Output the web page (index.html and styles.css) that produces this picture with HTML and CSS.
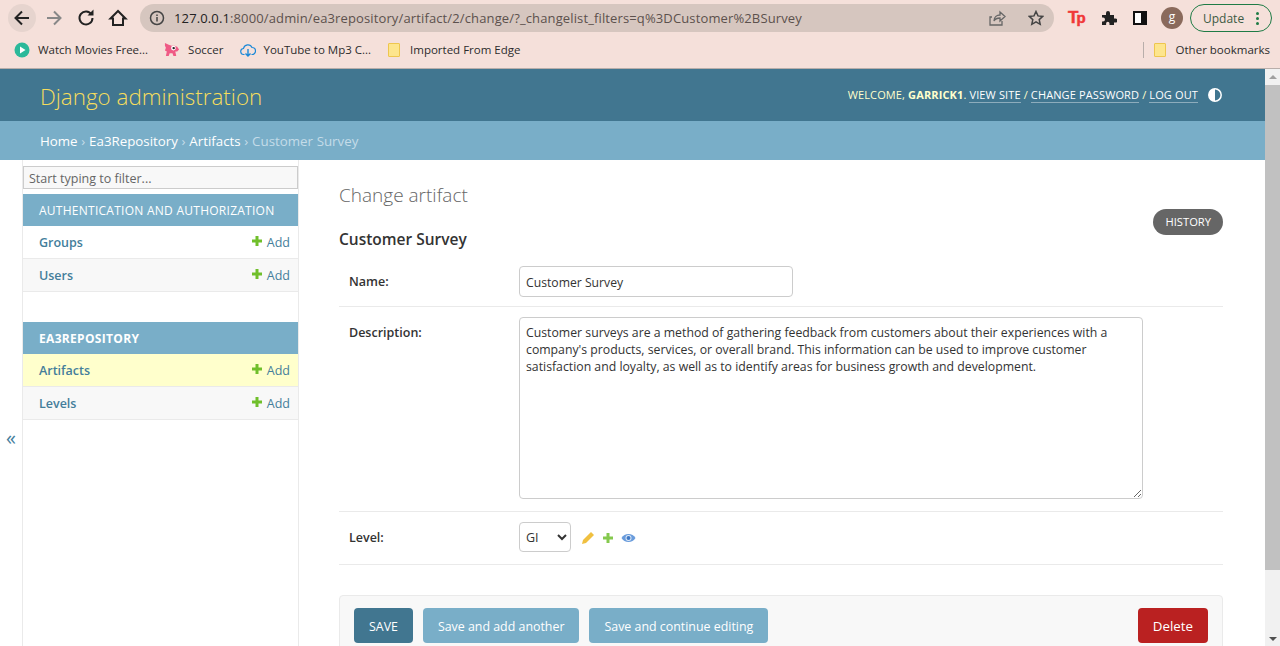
FILE: index.html
```html
<!DOCTYPE html>
<html lang="en">

<head>
    <meta charset="UTF-8">
    <title>Customer Survey | Change artifact | Django site admin</title>
    <link rel="stylesheet" href="styles.css">
</head>

<body>
    <div class="browser">
        <div class="toolbar">
            <span class="round-btn back">
                <svg width="20" height="20" viewBox="0 0 20 20"><path d="M17 10H4M10 3.5L3.5 10l6.500 6.500" fill="none" stroke="#222" stroke-width="2"/></svg>
            </span>
            <span class="round-btn">
                <svg width="20" height="20" viewBox="0 0 20 20"><path d="M3 10h13M10 3.500l6.500 6.500-6.500 6.500" fill="none" stroke="#888" stroke-width="2"/></svg>
            </span>
            <span class="round-btn">
                <svg width="20" height="20" viewBox="0 0 20 20"><path d="M15.500 6.500A6.500 6.500 0 1 0 16.500 10" fill="none" stroke="#222" stroke-width="2"/><path d="M11.500 7.500h6v-6z" fill="#222"/></svg>
            </span>
            <span class="round-btn">
                <svg width="20" height="20" viewBox="0 0 20 20"><path d="M10 3L2.500 10.500H5v6.500h10v-6.500h2.500z" fill="none" stroke="#222" stroke-width="2"/></svg>
            </span>
            <div class="omnibox">
                <svg class="info-icon" width="16" height="16" viewBox="0 0 16 16"><circle cx="8" cy="8" r="6.500" fill="none" stroke="#444" stroke-width="1.500"/><path d="M8 7v4.500M8 4.500v1.500" stroke="#444" stroke-width="1.500"/></svg>
                <span class="url"><span class="url-host">127.0.0.1</span>:8000/admin/ea3repository/artifact/2/change/?_changelist_filters=q%3DCustomer%2BSurvey</span>
                <svg class="share-icon" width="18" height="18" viewBox="0 0 18 18"><path d="M4 8H2v8h12v-4M6 12c0-4 3-6 6-6V3l5 4.500L12 12V9c-3 0-5 1-6 3z" fill="none" stroke="#666" stroke-width="1.300"/></svg>
                <svg class="star-icon" width="16" height="16" viewBox="0 0 16 16"><path d="M8 1.500l2 4.400 4.800.5-3.600 3.200 1 4.700L8 11.900l-4.200 2.400 1-4.700L1.200 6.400 6 5.900z" fill="none" stroke="#444" stroke-width="1.500"/></svg>
            </div>
            <span class="ext-tp">T<span class="ext-p">p</span></span>
            <svg class="ext-icon" width="16" height="16" viewBox="0 0 16 16"><path d="M1 5h4V3a2 2 0 0 1 4 0v2h4v3.500h1.500a2 2 0 0 1 0 4H13V15H8.500v-1.500a1.700 1.700 0 0 0-3.400 0V15H1v-3.500h1a2 2 0 0 0 0-4H1z" fill="#222"/></svg>
            <span class="side-panel"></span>
            <span class="avatar">g</span>
            <span class="update">Update<span class="dots"><i></i><i></i><i></i></span></span>
        </div>
        <div class="bookmarks">
            <span class="bookmark first">
                <svg width="16" height="16" viewBox="0 0 16 16"><circle cx="8" cy="8" r="7.500" fill="#2bb99a"/><path d="M6 4.500L11.500 8 6 11.500z" fill="#fff"/></svg>
                Watch Movies Free...
            </span>
            <span class="bookmark">
                <svg width="16" height="16" viewBox="0 0 17 17"><path d="M1 1l4 2 3 1h3l3 1 2 3-2 2h-2l1 5h-3l-1-3H6l-1 3H2l1-5-2-1 1-3-1-2z" fill="#ef5a85"/><circle cx="10" cy="6.500" r="2.500" fill="#fff"/><circle cx="10.300" cy="6.500" r="1.300" fill="#222"/></svg>
                Soccer
            </span>
            <span class="bookmark">
                <svg width="16" height="16" viewBox="0 0 16 16"><path d="M4.500 12.500H4a3 3 0 0 1-.500-6A4.500 4.500 0 0 1 12 5.500a3.500 3.500 0 0 1 0 7h-.5" fill="none" stroke="#1a88d8" stroke-width="1.200"/><path d="M8 7v7M5.500 11.500L8 14l2.500-2.500" fill="none" stroke="#1a88d8" stroke-width="1.400"/></svg>
                YouTube to Mp3 C...
            </span>
            <span class="bookmark imported">
                <span class="folder"></span>
                Imported From Edge
            </span>
            <span class="bookmark-sep"></span>
            <span class="bookmark other">
                <span class="folder"></span>
                Other bookmarks
            </span>
        </div>
    </div>

    <div class="page">
        <div class="viewport">
            <div class="header">
                <div class="branding">Django administration</div>
                <div class="user-tools">
                    <span>Welcome, <strong>garrick1</strong>. <a>View site</a> / <a>Change password</a> / <a>Log out</a></span>
                    <svg class="theme-toggle" width="16" height="16" viewBox="0 0 16 16"><circle cx="8" cy="8" r="6.200" fill="none" stroke="#fff" stroke-width="1.500"/><path d="M8 1.800a6.200 6.200 0 0 0 0 12.400z" fill="#fff"/></svg>
                </div>
            </div>
            <div class="breadcrumbs">
                <a>Home</a> › <a>Ea3Repository</a> › <a>Artifacts</a> › Customer Survey
            </div>

            <div class="main">
                <div class="nav-toggle">«</div>
                <div class="sidebar">
                    <input class="nav-filter" type="text" placeholder="Start typing to filter...">
                    <div class="app-module">
                        <div class="app-caption">Authentication and Authorization</div>
                        <div class="model-row"><a>Groups</a><span class="addlink"><svg class="plus" width="12" height="12" viewBox="0 0 12 12"><path d="M4.500 1h3v3.500H11v3H7.500V11h-3V7.500H1v-3h3.500z" fill="#70bf2b"/></svg>Add</span></div>
                        <div class="model-row alt"><a>Users</a><span class="addlink"><svg class="plus" width="12" height="12" viewBox="0 0 12 12"><path d="M4.500 1h3v3.500H11v3H7.500V11h-3V7.500H1v-3h3.500z" fill="#70bf2b"/></svg>Add</span></div>
                    </div>
                    <div class="app-module">
                        <div class="app-caption strong">Ea3Repository</div>
                        <div class="model-row current"><a>Artifacts</a><span class="addlink"><svg class="plus" width="12" height="12" viewBox="0 0 12 12"><path d="M4.500 1h3v3.500H11v3H7.500V11h-3V7.500H1v-3h3.500z" fill="#70bf2b"/></svg>Add</span></div>
                        <div class="model-row alt"><a>Levels</a><span class="addlink"><svg class="plus" width="12" height="12" viewBox="0 0 12 12"><path d="M4.500 1h3v3.500H11v3H7.500V11h-3V7.500H1v-3h3.500z" fill="#70bf2b"/></svg>Add</span></div>
                    </div>
                </div>

                <div class="content">
                    <div class="title-row">
                        <div>
                            <h1>Change artifact</h1>
                            <h2>Customer Survey</h2>
                        </div>
                        <a class="history">History</a>
                    </div>

                    <div class="form-row name-row">
                        <label>Name:</label>
                        <input class="text-input" type="text" value="Customer Survey">
                    </div>
                    <div class="form-row desc-row">
                        <label>Description:</label>
                        <textarea class="text-area">Customer surveys are a method of gathering feedback from customers about their experiences with a company's products, services, or overall brand. This information can be used to improve customer satisfaction and loyalty, as well as to identify areas for business growth and development.</textarea>
                    </div>
                    <div class="form-row level-row">
                        <label>Level:</label>
                        <select class="level-select"><option>GI</option></select>
                        <svg class="rel-icon first-rel" width="14" height="14" viewBox="0 0 14 14"><path d="M10 1l3 3-8 8-4 1 1-4z" fill="#f0c040"/></svg>
                        <svg class="rel-icon" width="12" height="12" viewBox="0 0 12 12"><path d="M4.500 1h3v3.500H11v3H7.500V11h-3V7.500H1v-3h3.500z" fill="#85c94e"/></svg>
                        <svg class="rel-icon" width="15" height="14" viewBox="0 0 15 14"><path d="M.5 7C2 4.300 4.500 3 7.500 3s5.500 1.300 7 4c-1.500 2.700-4 4-7 4s-5.500-1.300-7-4z" fill="#6a9cdc"/><circle cx="7.500" cy="7" r="3" fill="#dce8f7"/><circle cx="7.500" cy="7" r="2" fill="#3f78c4"/></svg>
                    </div>

                    <div class="submit-row">
                        <a class="btn btn-default">Save</a>
                        <a class="btn">Save and add another</a>
                        <a class="btn">Save and continue editing</a>
                        <a class="btn btn-delete">Delete</a>
                    </div>
                </div>
            </div>
        </div>
        <div class="scrollbar">
            <span class="arrow-up"></span>
            <span class="thumb"></span>
            <span class="arrow-down"></span>
        </div>
    </div>
</body>

</html>
```

FILE: styles.css
```css
* {
    box-sizing: border-box;
}

html,
body {
    height: 100%;
}

body {
    margin: 0;
    display: flex;
    flex-direction: column;
    overflow: hidden;
    font-family: "Open Sans", "Noto Sans", sans-serif;
    font-size: 13px;
    color: #333;
    background: #fff;
}

/* browser frame */
.browser {
    height: 69px;
    flex: none;
    background: #f5e0da;
    border-bottom: 1px solid #b8aeaa;
}

.toolbar {
    height: 36px;
    display: flex;
    align-items: center;
    padding-left: 8px;
}

.round-btn {
    width: 28px;
    height: 28px;
    margin-right: 4px;
    border-radius: 50%;
    display: flex;
    align-items: center;
    justify-content: center;
}

.back {
    background: #e6d4ce;
}

.omnibox {
    width: 914px;
    height: 28px;
    margin-left: 4px;
    border-radius: 14px;
    background: #d6c6bf;
    display: flex;
    align-items: center;
    padding-left: 9px;
}

.info-icon {
    flex: none;
}

.url {
    margin-left: 9px;
    font-size: 13px;
    letter-spacing: .13px;
    color: #5c514d;
    white-space: nowrap;
}

.url-host {
    color: #222;
}

.share-icon {
    margin-left: auto;
}

.star-icon {
    margin: 0 10px 0 22px;
}

.ext-tp {
    margin-left: 14px;
    width: 18px;
    font-family: "Liberation Sans", sans-serif;
    font-size: 17px;
    font-weight: bold;
    color: #f03838;
    letter-spacing: -2px;
    -webkit-text-stroke: .5px #f03838;
}

.ext-p {
    font-size: 15px;
}

.ext-icon {
    margin-left: 15px;
}

.side-panel {
    width: 14px;
    height: 14px;
    margin-left: 16px;
    border: 2px solid #111;
    border-left-width: 2px;
    border-right-width: 6px;
    background: #fff;
}

.avatar {
    width: 22px;
    height: 22px;
    margin-left: 14px;
    border-radius: 50%;
    background: #8a6a5c;
    color: #fff;
    font-size: 12px;
    line-height: 19px;
    text-align: center;
}

.update {
    width: 82px;
    height: 28px;
    margin-left: 7px;
    border: 1px solid #1e7b45;
    border-radius: 14px;
    display: flex;
    align-items: center;
    padding-left: 12px;
    font-size: 12px;
    color: #3d5a44;
}

.dots {
    margin-left: auto;
    margin-right: 12px;
    display: flex;
    flex-direction: column;
    gap: 2px;
}

.dots i {
    width: 3px;
    height: 3px;
    border-radius: 50%;
    background: #1e7b45;
}

.bookmarks {
    height: 32px;
    display: flex;
    align-items: center;
    padding-left: 14px;
    padding-bottom: 5px;
    font-size: 11.500px;
    color: #2c2c2c;
}

.bookmark {
    display: flex;
    align-items: center;
    gap: 8px;
    margin-right: 16px;
    white-space: nowrap;
}

.bookmark.imported {
    gap: 10px;
    margin-left: 1px;
}

.folder {
    width: 12px;
    height: 14px;
    background: #fde58d;
    border: 1px solid #eec64e;
    border-radius: 1px;
}

.bookmark-sep {
    width: 1px;
    height: 16px;
    margin-left: auto;
    margin-right: 10px;
    background: #b8aeaa;
}

.bookmark.other {
    gap: 10px;
    margin-right: 10px;
}

/* page */
.page {
    flex: 1;
    min-height: 0;
    display: flex;
}

.viewport {
    flex: 1;
    min-width: 0;
    overflow: hidden;
}

.scrollbar {
    width: 15px;
    flex: none;
    background: #f1f1f1;
    display: flex;
    flex-direction: column;
    align-items: center;
}

.arrow-up,
.arrow-down {
    width: 0;
    height: 0;
    border-left: 4px solid transparent;
    border-right: 4px solid transparent;
}

.arrow-up {
    margin-top: 6px;
    border-bottom: 4px solid #a0a0a0;
}

.arrow-down {
    margin-top: auto;
    margin-bottom: 5px;
    border-top: 4px solid #505050;
}

.thumb {
    width: 15px;
    height: 485px;
    margin-top: 6px;
    background: #c1c1c1;
}

/* header */
.header {
    height: 52px;
    background: #417690;
    display: flex;
    align-items: center;
    justify-content: space-between;
    padding: 0 42px 0 40px;
}

.branding {
    padding-top: 2px;
    font-size: 22.400px;
    font-weight: 300;
    color: #f5dd5d;
}

.user-tools {
    display: flex;
    align-items: center;
    padding-bottom: 1px;
    font-size: 11px;
    letter-spacing: .13px;
    text-transform: uppercase;
    color: #ffc;
    white-space: nowrap;
}

.user-tools strong {
    font-weight: 700;
}

.user-tools a {
    color: #fff;
    border-bottom: 1px solid rgba(255, 255, 255, .4);
}

.theme-toggle {
    margin-left: 9px;
}

.breadcrumbs {
    height: 39px;
    padding: 0 40px;
    background: #79aec8;
    color: #c4dce8;
    font-size: 13.300px;
    line-height: 41px;
    word-spacing: .3px;
}

.breadcrumbs a {
    color: #fff;
}

/* sidebar */
.main {
    display: flex;
}

.nav-toggle {
    width: 23px;
    flex: none;
    padding-top: 263px;
    border-right: 1px solid #eaeaea;
    color: #447e9b;
    font-size: 20px;
    line-height: 30px;
    text-align: center;
}

.sidebar {
    width: 276px;
    flex: none;
    border-right: 1px solid #eaeaea;
    padding-top: 6px;
}

.nav-filter {
    display: block;
    width: 275px;
    height: 23px;
    margin-bottom: 5px;
    padding: 1px 5px 0;
    border: 1px solid #ccc;
    background: #f8f8f8;
    font-family: inherit;
    font-size: 12.500px;
    color: #333;
}

.nav-filter::placeholder {
    color: #666;
}

.app-module {
    margin-bottom: 30px;
}

.app-caption {
    height: 32px;
    padding-left: 16px;
    background: #79aec8;
    color: #fff;
    font-size: 12px;
    line-height: 33px;
    letter-spacing: .26px;
    text-transform: uppercase;
}

.app-caption.strong {
    font-weight: 700;
    letter-spacing: .32px;
}

.model-row {
    height: 33px;
    display: flex;
    align-items: center;
    justify-content: space-between;
    padding: 0 8px 0 16px;
    border-bottom: 1px solid #eaeaea;
    color: #447e9b;
    background: #fff;
    font-size: 12.500px;
}

.model-row a {
    font-weight: 600;
}

.model-row.alt {
    background: #f8f8f8;
}

.model-row.current {
    background: #ffc;
}

.addlink {
    display: flex;
    align-items: center;
    gap: 4px;
}

.plus {
    margin-top: -3px;
}

/* form */
.content {
    flex: 1;
    min-width: 0;
    padding: 21px 42px 0 40px;
}

.title-row {
    display: flex;
    justify-content: space-between;
    align-items: flex-end;
    margin-bottom: 7px;
}

h1 {
    margin: 0 0 20px;
    font-size: 19px;
    font-weight: 300;
    line-height: 28px;
    color: #666;
}

h2 {
    margin: 0;
    font-size: 15.500px;
    font-weight: 600;
    line-height: 20px;
    color: #333;
}

.history {
    height: 26px;
    margin-bottom: 14px;
    padding: 0 12px;
    border-radius: 13px;
    background: #666;
    color: #fff;
    font-size: 11.200px;
    line-height: 26px;
    text-transform: uppercase;
}

.form-row {
    display: flex;
    padding: 10px;
    border-bottom: 1px solid #eaeaea;
}

.form-row label {
    width: 170px;
    flex: none;
    font-size: 12.500px;
    font-weight: 600;
}

.name-row {
    height: 51px;
    align-items: center;
}

.desc-row {
    height: 205px;
}

.desc-row label {
    margin-top: 7px;
}

.level-row {
    height: 53px;
    align-items: center;
    padding: 9px 10px 11px;
}

.text-input {
    width: 274px;
    height: 31px;
    padding: 2px 6px 0;
    border: 1px solid #ccc;
    border-radius: 4px;
    font-family: inherit;
    font-size: 12.200px;
    color: #333;
}

.text-area {
    width: 624px;
    height: 182px;
    padding: 6px;
    border: 1px solid #ccc;
    border-radius: 4px;
    font-family: inherit;
    font-size: 12.280px;
    line-height: 17px;
    color: #333;
}

.level-select {
    width: 52px;
    height: 30px;
    padding: 0 2px;
    border: 1px solid #ccc;
    border-radius: 4px;
    background: #fff;
    font-family: inherit;
    font-size: 12.500px;
    color: #333;
}

.rel-icon {
    margin-left: 7px;
    margin-top: 2px;
}

.first-rel {
    margin-left: 10px;
}

.submit-row {
    display: flex;
    gap: 10px;
    height: 70px;
    margin-top: 30px;
    padding: 12px 14px;
    border: 1px solid #eaeaea;
    border-radius: 4px;
    background: #f8f8f8;
}

.btn {
    height: 35px;
    padding: 0 15px;
    border-radius: 4px;
    background: #79aec8;
    color: #fff;
    font-size: 12.400px;
    line-height: 37px;
}

.btn-default {
    background: #417690;
    text-transform: uppercase;
}

.btn-delete {
    margin-left: auto;
    background: #ba2121;
    font-size: 13.300px;
}
```
